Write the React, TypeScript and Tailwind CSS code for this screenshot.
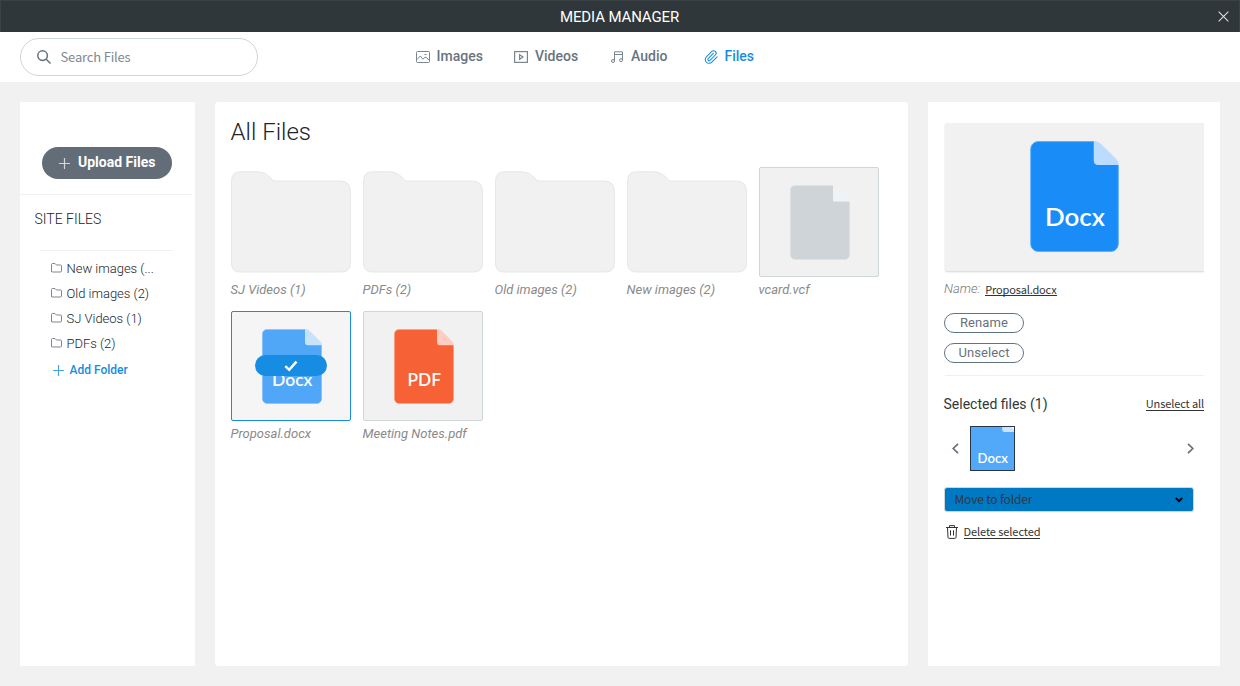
import React from 'react';

const SOURCE = "font-['Noto_Sans_CJK_SC',sans-serif]";

function FileArt({ kind, className }: { kind: 'docx' | 'pdf' | 'blank'; className: string }) {
  const fill = kind === 'docx' ? '#198cf8' : kind === 'pdf' ? '#f66135' : '#ced4d8';
  const edge = kind === 'docx' ? '#58acfa' : kind === 'pdf' ? '#f8a187' : '#dfe3e6';
  const fold = kind === 'docx' ? '#bbdcfe' : kind === 'pdf' ? '#fccdc1' : '#f0f3f6';
  return (
    <svg viewBox="0 0 60 75" className={className}>
      <path d="M5 .4H43.5L59.6 16.5V69.6a5 5 0 0 1-5 5H5.4a5 5 0 0 1-5-5V5.4A5 5 0 0 1 5 .4Z" fill={fill} stroke={edge} strokeWidth=".6" />
      {kind === 'blank' && <path d="M43 0H60V16.4H43Z" fill="#f1f1f2" />}
      <path d="M43 0.1H44.4Q46.3.4 47.6 1.7L58.5 12.5Q60 14 60 16.2H46Q43 16.2 43 13.2Z" fill={fold} />
      {kind !== 'blank' && (
        <text
          x="30.3"
          y="57.3"
          textAnchor="middle"
          textLength={kind === 'docx' ? 40.5 : 33.5}
          lengthAdjust="spacingAndGlyphs"
          fill="#fff"
          className="font-['Lato',sans-serif] text-[17px] font-semibold"
        >
          {kind === 'docx' ? 'Docx' : 'PDF'}
        </text>
      )}
    </svg>
  );
}

function FolderArt() {
  return (
    <svg viewBox="0 0 120 110" className="block h-[110px] w-[120px]">
      <path
        d="M.5 14.5Q.5 4.800 9 4.800H26C34 4.800 38.500 9 42 14H109Q119.500 14 119.500 25V96Q119.500 105 110.500 105H9Q.5 105 .5 96Z"
        fill="#f1f1f2"
        stroke="#e6e7e7"
      />
    </svg>
  );
}

function Caption({ text }: { text: string }) {
  return <div className="mt-[5px] -ml-[0.5px] h-4 text-[13px] leading-4 whitespace-nowrap text-[#8a8a8a] italic">{text}</div>;
}

function FolderTile({ name }: { name: string }) {
  return (
    <div className="w-[120px]">
      <FolderArt />
      <Caption text={name} />
    </div>
  );
}

function FileTile({ name, kind, selected }: { name: string; kind: 'docx' | 'pdf' | 'blank'; selected?: boolean }) {
  return (
    <div className="w-[120px]">
      <div
        className={`relative flex h-[110px] justify-center rounded-[2px] border pt-[17px] ${
          selected ? 'border-[#168ce2] bg-[#f5f5f5]' : 'border-[#ced6d9] bg-[#f1f1f2]'
        }`}
      >
        <FileArt kind={kind} className={selected ? 'ml-[2px] h-[75px] w-[60px] opacity-75' : 'ml-[2px] h-[75px] w-[60px]'} />
        {selected && (
          <div className="absolute top-[43px] left-[23px] flex h-[21px] w-[72px] items-center justify-center rounded-full bg-[#168ce2]">
            <svg viewBox="0 0 14 12" className="h-3 w-3.5">
              <path d="M1.300 6.200 5.200 9.800 12.500 1.700" fill="none" stroke="#fff" strokeWidth="2.500" />
            </svg>
          </div>
        )}
      </div>
      <Caption text={name} />
    </div>
  );
}

function SideFolder({ name }: { name: string }) {
  return (
    <div className="flex h-[25px] items-center">
      <svg viewBox="0 0 11 10" className="-mt-px mr-[4.5px] h-2.5 w-[11px]" fill="none" stroke="#7e8791">
        <path d="M.5 9V1.500q0-1 1-1H4L5.500 2H9.500q1 0 1 1V8q0 1-1 1H1.500q-1 0-1-1" />
      </svg>
      <span className="text-[13px] font-light tracking-[-0.02px] whitespace-nowrap text-[#202428]">{name}</span>
    </div>
  );
}

function Header() {
  return (
    <header className="flex h-8 items-center border border-b-0 border-[#3b4245] bg-[#30373a]">
      <div className="w-10" />
      <h1 className="flex-1 pr-[1px] text-center text-[15px] leading-[30px] font-normal tracking-[-0.13px] text-white">MEDIA MANAGER</h1>
      <div className="flex w-10 justify-end pr-[10px]">
        <svg viewBox="0 0 12 12" className="h-[11px] w-[11px]" stroke="#e4e5e5" strokeWidth="1.100">
          <path d="M.7.7 11.300 11.300M11.300.7.7 11.300" />
        </svg>
      </div>
    </header>
  );
}

function Toolbar() {
  return (
    <div className="flex h-[50px] bg-white pl-5">
      <div className="mt-[6px] flex h-[38px] w-[238px] items-center rounded-full border border-[#ced6d9] pl-4">
        <svg viewBox="0 0 14 14" className="h-3.5 w-3.5" fill="none" stroke="#65707c" strokeWidth="1.500">
          <circle cx="5.600" cy="5.600" r="4.800" />
          <path d="m9.200 9.200 4.300 4.300" />
        </svg>
        <span className={`ml-[9.5px] text-[13px] leading-5 tracking-[-0.18px] text-[#808891] ${SOURCE}`}>Search Files</span>
      </div>
      <nav className="ml-[158px] flex h-12 items-center text-[14px] font-medium text-[#69737f]">
        <div className="flex w-[98px] items-center">
          <svg viewBox="0 0 14 12" className="mt-[2px] mr-[6.500px] h-3 w-3.5" fill="none" stroke="#7b8590">
            <rect x=".5" y=".5" width="13" height="11" rx="1" />
            <path d="M1 8.500 4.300 5l2.600 3.200L9 6.300l1.700.4 2.300 2.500" />
            <path d="M8.500 3.500h2" />
          </svg>
          Images
        </div>
        <div className="flex w-[97px] items-center">
          <svg viewBox="0 0 14 12" className="mt-[2px] mr-[7px] h-3 w-3.5" fill="none" stroke="#7b8590" strokeWidth="1.200">
            <rect x=".6" y=".6" width="12.800" height="10.800" />
            <path d="M5.600 3.700 9 6 5.600 8.300Z" />
          </svg>
          Videos
        </div>
        <div className="flex w-[93px] items-center">
          <svg viewBox="0 0 13 12" className="mt-[2px] mr-[7px] h-3 w-[13px]" fill="none" stroke="#7b8590">
            <path d="M3.500 10V.8H11.500V9M3.500 3.500H11.500" />
            <circle cx="2" cy="10" r="1.500" />
            <circle cx="10" cy="9.200" r="1.500" />
          </svg>
          Audio
        </div>
        <div className="flex items-center text-[#168ce2]">
          <svg viewBox="1 1 22 22" className="mt-[2px] mr-[6.500px] h-3.5 w-3.5" fill="none" stroke="#168ce2" strokeWidth="1.600" strokeLinecap="round">
            <path d="m16 6-8.414 8.586a2 2 0 0 0 2.829 2.829l8.414-8.586a4 4 0 1 0-5.657-5.657l-8.379 8.551a6 6 0 1 0 8.485 8.485l8.379-8.551" />
          </svg>
          Files
        </div>
      </nav>
    </div>
  );
}

function Sidebar() {
  return (
    <aside className="w-[175px] bg-white">
      <div className="mr-[3px] flex h-[93px] border-b border-[#f0f2f3] pt-[45px] pl-[22px]">
        <button className="flex h-8 w-[130px] items-center rounded-full bg-[#626d78] pl-[17px] text-[14px] font-bold tracking-[0px] text-white">
          <svg viewBox="0 0 11 11" className="mr-2 h-[11px] w-[11px]" stroke="#d5d8db" strokeWidth="1.200">
            <path d="M5.500 0v11M0 5.500h11" />
          </svg>
          <span className="-mt-0.5 whitespace-nowrap">Upload Files</span>
        </button>
      </div>
      <h2 className="mt-[14px] ml-[14.500px] text-[14px] leading-[20px] font-light text-[#202428]">SITE FILES</h2>
      <div className="mt-[21px] ml-5 w-[133px] border-t border-[#f0f2f3]" />
      <div className="mt-[5px] ml-[31px]">
        <SideFolder name="New images (..." />
        <SideFolder name="Old images (2)" />
        <SideFolder name="SJ Videos (1)" />
        <SideFolder name="PDFs (2)" />
        <div className="ml-[1.500px] flex h-[28px] items-center text-[12px] font-medium text-[#168ce2]">
          <svg viewBox="0 0 11 11" className="mr-[6px] h-[11px] w-[11px]" stroke="#4aa5e8" strokeWidth="1.200">
            <path d="M5.500 0v11M0 5.500h11" />
          </svg>
          Add Folder
        </div>
      </div>
    </aside>
  );
}

function Details() {
  const pill = 'block h-5 w-20 rounded-full border border-[#5f7482] text-center text-[13px] leading-[18px] tracking-[0.1px] text-[#66737e]';
  return (
    <aside className="w-[292px] bg-white pt-[21px] pl-4">
      <div className="w-[260px] overflow-hidden pb-1 pl-px">
        <div className="flex h-[148px] w-[262px] justify-center rounded-[2px] bg-[#f1f1f2] pt-[18px] shadow-[0_1px_2px_#d5d5d5]">
          <FileArt kind="docx" className="mr-[3px] h-[111px] w-[89px]" />
        </div>
      </div>
      <div className="mt-1 flex h-5 items-center">
        <span className="mr-[5px] text-[13px] font-light text-[#777] italic">Name:</span>
        <span className={`h-[13px] border-b border-[#333] text-[11px] leading-[12px] tracking-[-0.15px] text-[#333] ${SOURCE}`}>Proposal.docx</span>
      </div>
      <div className="mt-[14px] flex flex-col gap-[10px]">
        <button className={pill}>Rename</button>
        <button className={pill}>Unselect</button>
      </div>
      <div className="mt-3 ml-px w-[259px] border-t border-[#f0f0f1]" />
      <div className="mt-[18px] flex h-5 w-[260px] items-center justify-between">
        <span className="-ml-[0.5px] text-[14px] text-[#30373a]">Selected files (1)</span>
        <span className={`h-[13px] border-b border-[#333] text-[11px] leading-[11px] tracking-[-0.12px] text-[#333] ${SOURCE}`}>Unselect all</span>
      </div>
      <div className="mt-3 flex h-[45px] w-[250px] items-center pl-[8px]">
        <svg viewBox="0 0 7 11" className="-mt-px h-[11px] w-[7px]" fill="none" stroke="#65707c" strokeWidth="1.700">
          <path d="M6 .8 1.200 5.500 6 10.200" />
        </svg>
        <div className="ml-[11px] flex h-[45px] w-[45px] items-end justify-center overflow-hidden border border-[#263645] bg-white">
          <FileArt kind="docx" className="-mb-[6px] h-[56px] w-[45px] shrink-0 opacity-75" />
        </div>
        <svg viewBox="0 0 7 11" className="-mt-px ml-auto h-[11px] w-[7px]" fill="none" stroke="#65707c" strokeWidth="1.700">
          <path d="M1 .8 5.800 5.500 1 10.200" />
        </svg>
      </div>
      <div className="mt-4 flex h-[25px] w-[250px] items-center justify-between rounded-[3px] border border-[#ced6d9] bg-[#0079c4] pr-[10px] pl-[9.500px]">
        <span className={`-mt-px text-[12px] leading-5 tracking-[-0.17px] text-[#30373a] ${SOURCE}`}>Move to folder</span>
        <svg viewBox="0 0 8 6" className="h-1.5 w-2" fill="none" stroke="#000" strokeWidth="1.800">
          <path d="M.8 1 4 4.200 7.200 1" />
        </svg>
      </div>
      <div className="mt-[10px] flex h-5 items-center pl-[2px]">
        <svg viewBox="0 0 12 14" className="mr-[5.500px] h-3.5 w-3" fill="none" stroke="#333">
          <path d="M0 2.500H12M3.500 2.500V.6h5V2.500M1.500 2.500 2 12.400q.1 1 1.200 1H8.800q1.100 0 1.200-1L10.500 2.500M4.500 5.300V10.500M7.500 5.300V10.500" />
        </svg>
        <span className={`h-[13px] border-b border-[#333] text-[11px] leading-[11px] tracking-[-0.08px] text-[#333] ${SOURCE}`}>Delete selected</span>
      </div>
    </aside>
  );
}

export default function App() {
  return (
    <div className="flex h-screen flex-col overflow-hidden bg-[#f1f1f2] font-['Roboto',sans-serif]">
      <Header />
      <Toolbar />
      <div className="flex flex-1 gap-5 p-5">
        <Sidebar />
        <main className="w-[693px] rounded-[3px] bg-white pt-4 pl-4">
          <h2 className="-ml-[0.5px] text-[24px] leading-7 font-light text-[#202428]">All Files</h2>
          <div className="mt-[21px] grid grid-cols-[repeat(5,120px)] gap-x-3 gap-y-[13px]">
            <FolderTile name="SJ Videos (1)" />
            <FolderTile name="PDFs (2)" />
            <FolderTile name="Old images (2)" />
            <FolderTile name="New images (2)" />
            <FileTile name="vcard.vcf" kind="blank" />
            <FileTile name="Proposal.docx" kind="docx" selected />
            <FileTile name="Meeting Notes.pdf" kind="pdf" />
          </div>
        </main>
        <Details />
      </div>
    </div>
  );
}
